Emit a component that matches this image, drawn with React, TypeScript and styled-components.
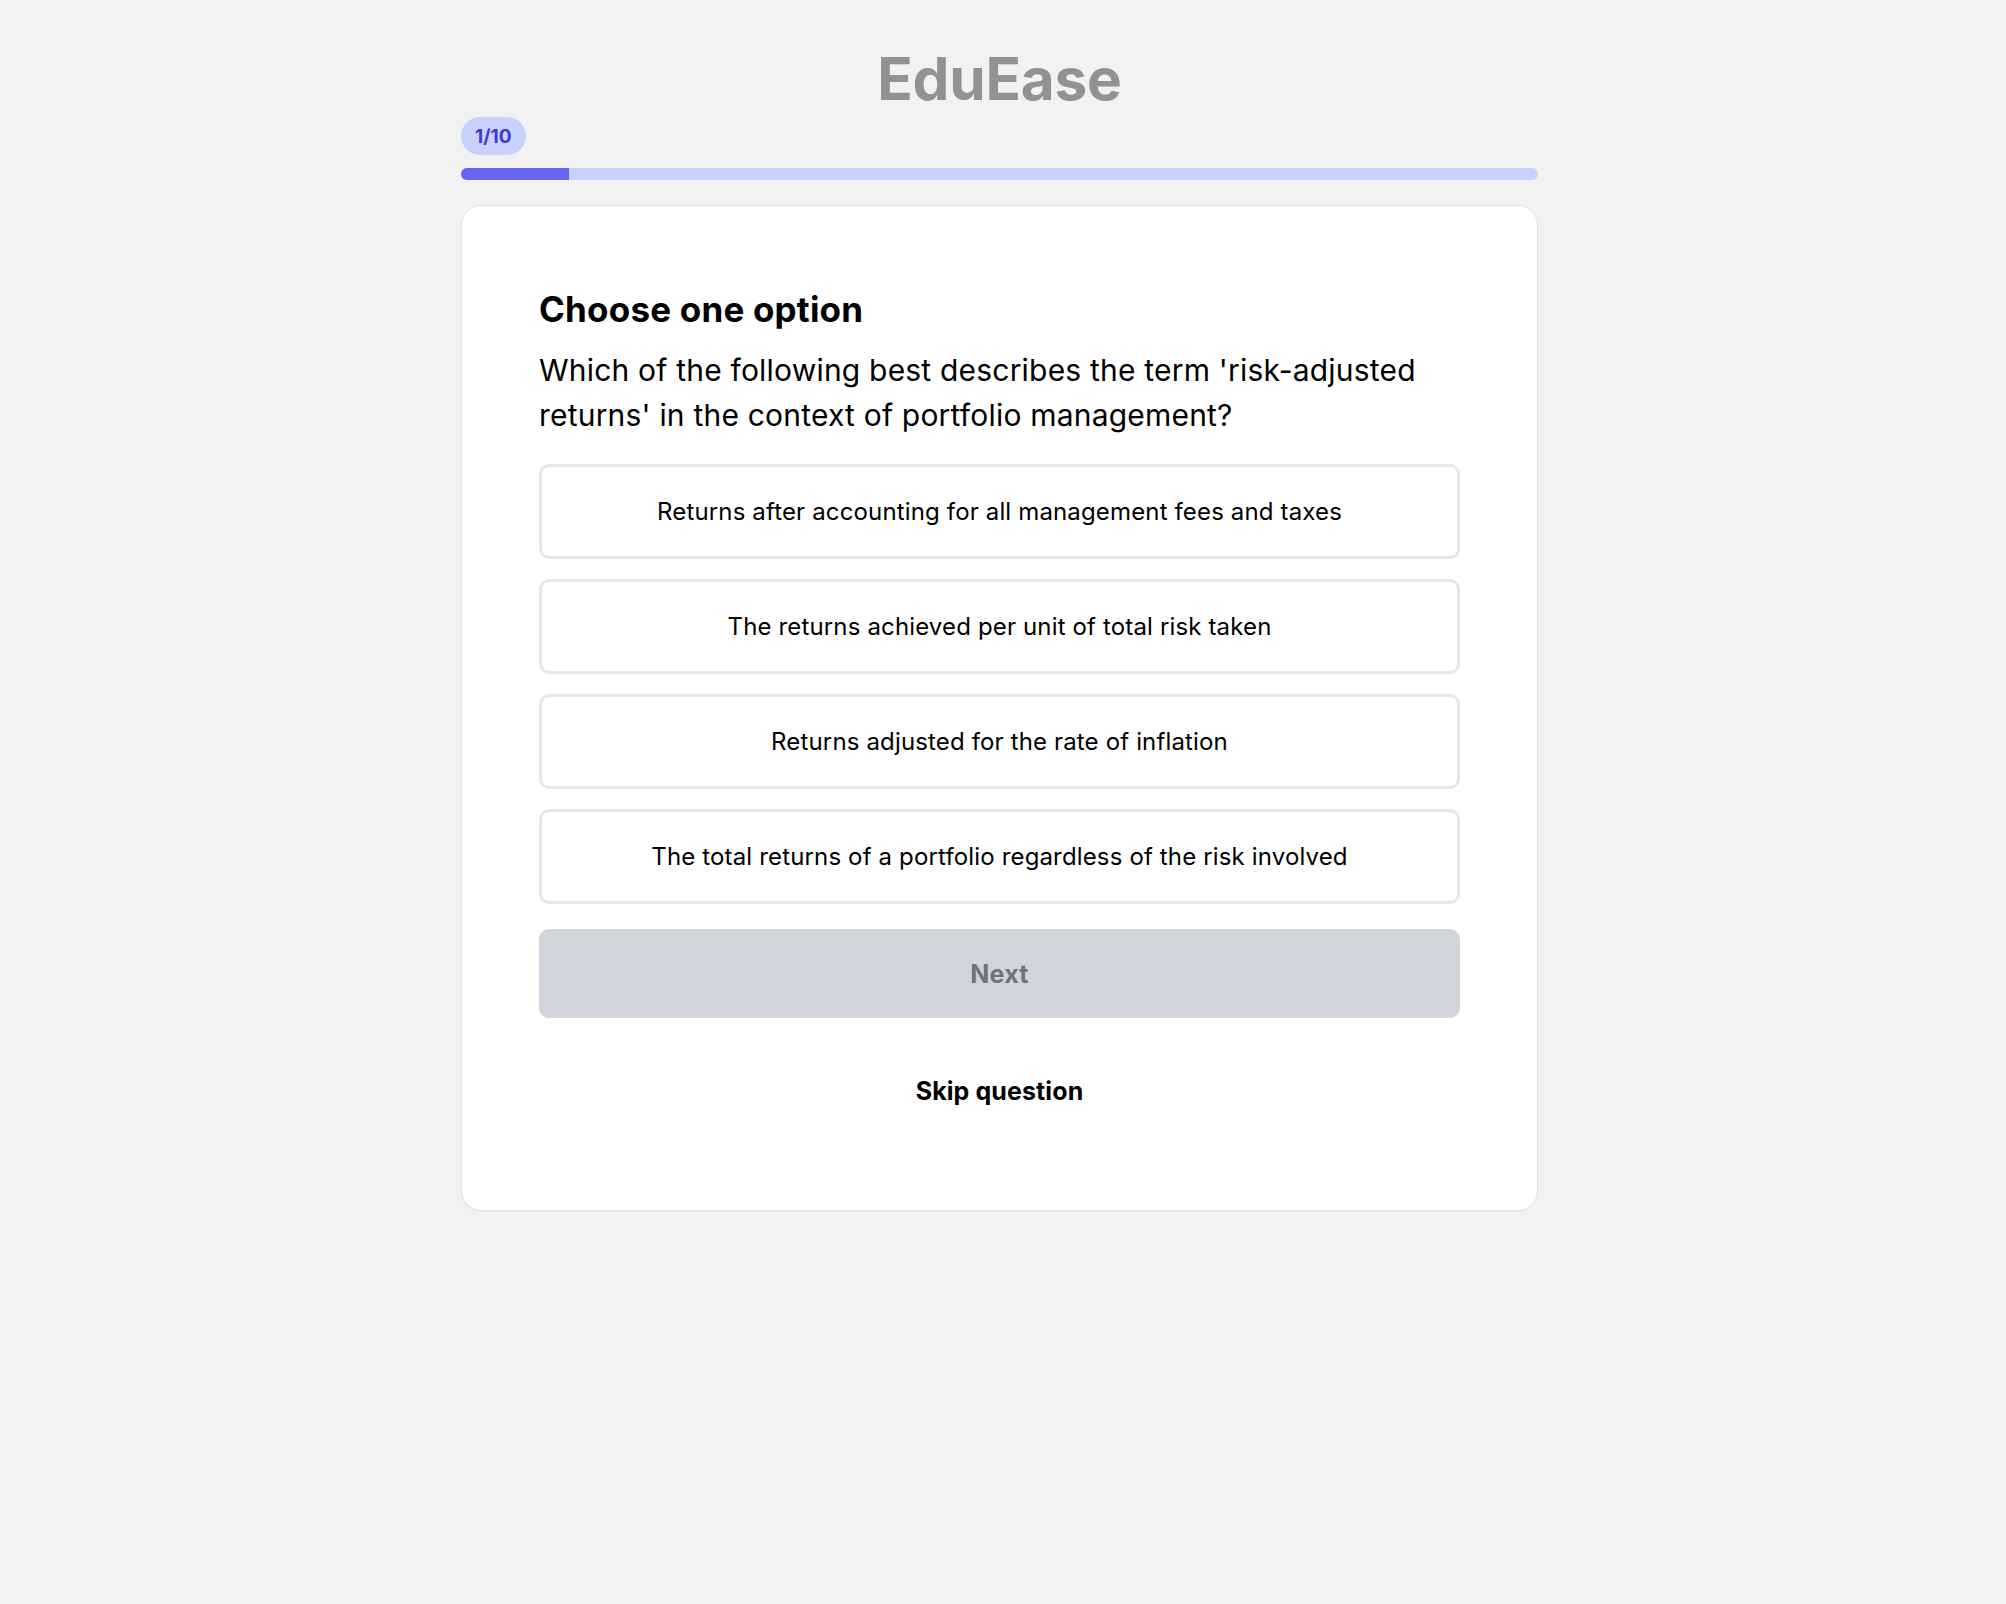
import React from "react";
import styled, { createGlobalStyle } from "styled-components";

const GlobalStyle = createGlobalStyle`
  html, body {
    margin: 0;
    padding: 0;
    background: #f2f2f2;
    font-family: Inter, "Noto Sans", "Liberation Sans", sans-serif;
    color: #000;
  }
  * { box-sizing: border-box; }
`;

const Page = styled.div`
  min-height: 1604px;
  display: flex;
  justify-content: center;
  padding: 43px 7px 0 0;
`;

const Column = styled.main`
  width: 1077px;
  display: flex;
  flex-direction: column;
`;

const Brand = styled.h1`
  margin: 0;
  text-align: center;
  font-size: 58.5px;
  line-height: 72px;
  font-weight: 700;
  color: #929292;
  letter-spacing: -0.2px;
`;

const BadgeRow = styled.div`
  display: flex;
  margin-top: 2px;
`;

const Badge = styled.span`
  display: inline-flex;
  align-items: center;
  justify-content: center;
  height: 38px;
  padding: 0 14px;
  border-radius: 19px;
  background: #c7d2fe;
  color: #4338ca;
  font-size: 19px;
  font-weight: 700;
`;

const Track = styled.div`
  margin-top: 13px;
  height: 12px;
  border-radius: 999px;
  background: #c7d2fe;
  overflow: hidden;
`;

const Fill = styled.div`
  height: 100%;
  background: #6366f1;
`;

const Card = styled.section`
  margin-top: 25px;
  background: #fff;
  border: 1px solid #e4e4e4;
  border-radius: 20px;
  box-shadow: 0 1px 2px rgba(0, 0, 0, 0.04);
  padding: 83px 77px 103px;
  display: flex;
  flex-direction: column;
`;

const Heading = styled.h2`
  margin: 0;
  font-size: 35px;
  line-height: 40px;
  font-weight: 700;
  letter-spacing: 0.2px;
`;

const Question = styled.p`
  margin: 19px 0 0;
  font-size: 30px;
  line-height: 45px;
  font-weight: 400;
  letter-spacing: 0.2px;
`;

const Options = styled.div`
  margin-top: 26px;
  display: flex;
  flex-direction: column;
  gap: 20px;
`;

const Option = styled.button`
  height: 95px;
  width: 100%;
  background: #fff;
  border: 3px solid #e5e7eb;
  border-radius: 10px;
  font-family: inherit;
  font-size: 24px;
  letter-spacing: 0.15px;
  color: #000;
  cursor: pointer;
  display: flex;
  align-items: center;
  justify-content: center;
`;

const NextButton = styled.button<{ $enabled?: boolean }>`
  margin-top: 25px;
  height: 89px;
  width: 100%;
  border: none;
  border-radius: 10px;
  background: ${(p) => (p.$enabled ? "#6366f1" : "#d1d5db")};
  color: ${(p) => (p.$enabled ? "#fff" : "#6b7280")};
  font-family: inherit;
  font-size: 25px;
  letter-spacing: 0.3px;
  font-weight: 700;
`;

const SkipButton = styled.button`
  margin: 57px auto 0;
  background: none;
  border: none;
  padding: 0;
  font-family: inherit;
  font-size: 25px;
  line-height: 32px;
  letter-spacing: 0.1px;
  font-weight: 700;
  color: #000;
  cursor: pointer;
`;

const options = [
  "Returns after accounting for all management fees and taxes",
  "The returns achieved per unit of total risk taken",
  "Returns adjusted for the rate of inflation",
  "The total returns of a portfolio regardless of the risk involved",
];

export default function App() {
  const current = 1;
  const total = 10;
  return (
    <>
      <GlobalStyle />
      <Page>
        <Column>
          <Brand>EduEase</Brand>
          <BadgeRow>
            <Badge>
              {current}/{total}
            </Badge>
          </BadgeRow>
          <Track>
            <Fill style={{ width: `${(current / total) * 100}%` }} />
          </Track>
          <Card>
            <Heading>Choose one option</Heading>
            <Question>
              Which of the following best describes the term 'risk-adjusted
              returns' in the context of portfolio management?
            </Question>
            <Options>
              {options.map((o) => (
                <Option key={o}>{o}</Option>
              ))}
            </Options>
            <NextButton disabled>Next</NextButton>
            <SkipButton>Skip question</SkipButton>
          </Card>
        </Column>
      </Page>
    </>
  );
}
